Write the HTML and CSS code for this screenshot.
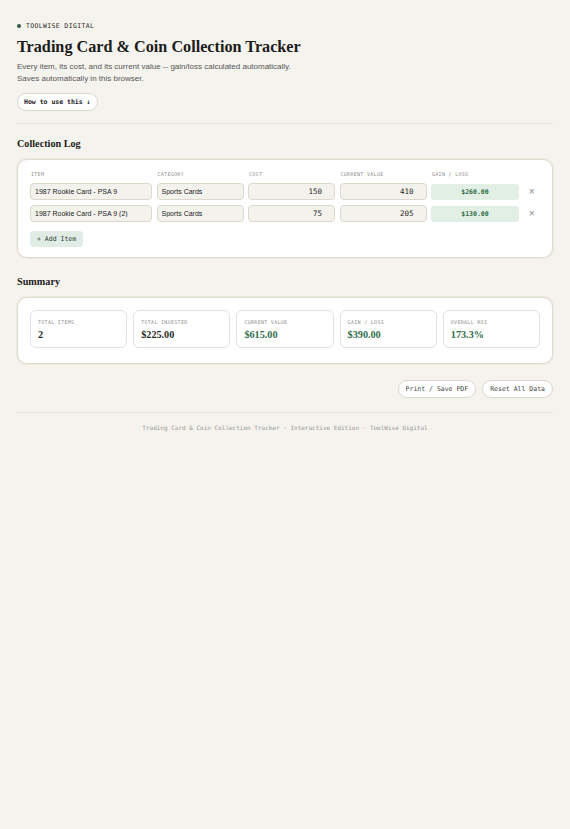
FILE: index.html
```html
<!DOCTYPE html>
<html lang="en">
<head>
	<meta charset="UTF-8">
	<meta name="viewport" content="width=device-width, initial-scale=1.0">
	<title>Trading Card &amp; Coin Collection Tracker</title>
	<link rel="stylesheet" href="styles.css">
</head>
<body>
	<div class="page">
		<header class="top">
			<div class="brand"><span class="brand-dot"></span>TOOLWISE DIGITAL</div>
			<h1>Trading Card &amp; Coin Collection Tracker</h1>
			<p class="lead">Every item, its cost, and its current value -- gain/loss calculated automatically.<br>Saves automatically in this browser.</p>
			<button class="pill pill-bold">How to use this ↓</button>
		</header>

		<hr class="rule">

		<h2>Collection Log</h2>
		<div class="card log">
			<div class="log-row log-head">
				<span>Item</span>
				<span>Category</span>
				<span>Cost</span>
				<span>Current Value</span>
				<span>Gain / Loss</span>
				<span></span>
			</div>
			<div class="log-row">
				<input class="field" type="text" value="1987 Rookie Card - PSA 9">
				<input class="field" type="text" value="Sports Cards">
				<input class="field num" type="text" value="150">
				<input class="field num" type="text" value="410">
				<div class="gain">$260.00</div>
				<button class="remove">×</button>
			</div>
			<div class="log-row">
				<input class="field" type="text" value="1987 Rookie Card - PSA 9 (2)">
				<input class="field" type="text" value="Sports Cards">
				<input class="field num" type="text" value="75">
				<input class="field num" type="text" value="205">
				<div class="gain">$130.00</div>
				<button class="remove">×</button>
			</div>
			<button class="add">+ Add Item</button>
		</div>

		<h2>Summary</h2>
		<div class="card stats">
			<div class="stat">
				<div class="stat-label">Total Items</div>
				<div class="stat-value">2</div>
			</div>
			<div class="stat">
				<div class="stat-label">Total Invested</div>
				<div class="stat-value">$225.00</div>
			</div>
			<div class="stat">
				<div class="stat-label">Current Value</div>
				<div class="stat-value up">$615.00</div>
			</div>
			<div class="stat">
				<div class="stat-label">Gain / Loss</div>
				<div class="stat-value up">$390.00</div>
			</div>
			<div class="stat">
				<div class="stat-label">Overall ROI</div>
				<div class="stat-value up">173.3%</div>
			</div>
		</div>

		<div class="actions">
			<button class="pill">Print / Save PDF</button>
			<button class="pill">Reset All Data</button>
		</div>

		<hr class="rule">

		<footer class="foot">Trading Card &amp; Coin Collection Tracker · Interactive Edition · ToolWise Digital</footer>
	</div>
</body>
</html>
```

FILE: styles.css
```css
*{margin:0;padding:0;box-sizing:border-box;}
body{background:#f5f3ee;color:#1c1c1a;font-family:"Liberation Sans",Arial,sans-serif;}
.page{padding:22px 17px 40px;}

.brand{display:flex;align-items:center;gap:5px;font-family:"DejaVu Sans Mono",monospace;font-size:6.5px;letter-spacing:0.35px;color:#2b2b2b;}
.brand-dot{width:4px;height:4px;border-radius:50%;background:#2d5a3d;}
h1{font-family:"Liberation Serif","Times New Roman",serif;font-size:16.2px;font-weight:bold;margin-top:8px;line-height:1.2;}
.lead{font-size:8px;line-height:12px;color:#555;margin-top:4px;}
.pill{font-family:"DejaVu Sans Mono",monospace;font-size:6.5px;color:#444;background:#fff;border:1px solid #dcd8ce;border-radius:10px;padding:4px 7px;cursor:pointer;}
.pill-bold{font-weight:bold;color:#222;margin-top:8px;padding:4px 6px;}

.rule{border:0;border-top:1px solid #e4e0d7;margin:12px 0 14px;}

h2{font-family:"Liberation Serif","Times New Roman",serif;font-size:10.2px;font-weight:bold;margin-bottom:10px;}
.card{background:#fff;border:1px solid #dfdbd0;border-radius:10px;box-shadow:0 0 0 1px #ece9e1;}

.log{padding:11px 12px 10px;margin-bottom:18px;}
.log-row{display:grid;grid-template-columns:122px 87px 87px 87px 88px 1fr;gap:4.5px;align-items:center;margin-bottom:5px;}
.log-head{font-family:"DejaVu Sans Mono",monospace;font-size:5px;text-transform:uppercase;letter-spacing:0.3px;color:#8f8f8f;margin-bottom:6px;padding-left:1px;}
.field{height:17px;background:#f4f2ed;border:1px solid #ddd8cc;border-radius:4px;font-family:"Liberation Sans",Arial,sans-serif;font-size:7px;color:#222;padding:0 4px;width:100%;}
.field.num{font-family:"DejaVu Sans Mono",monospace;text-align:right;padding-right:12px;font-size:7.5px;}
.gain{height:16px;background:#e1efe5;border-radius:3px;display:flex;align-items:center;justify-content:center;font-family:"DejaVu Sans Mono",monospace;font-size:6.5px;font-weight:bold;color:#2d6b45;}
.remove{border:0;background:none;color:#888;font-size:10px;justify-self:center;cursor:pointer;}
.add{margin-top:1px;border:0;background:#e2ece6;border-radius:4px;font-family:"DejaVu Sans Mono",monospace;font-size:6.5px;color:#2a3b31;padding:4px 7px;cursor:pointer;}

.stats{display:grid;grid-template-columns:repeat(5,1fr);gap:6px;padding:12px 12px 15px;}
.stat{border:1px solid #e5e2da;border-radius:6px;padding:8px 7px 7px;}
.stat-label{font-family:"DejaVu Sans Mono",monospace;font-size:5px;text-transform:uppercase;letter-spacing:0.3px;color:#8f8f8f;}
.stat-value{font-family:"Liberation Serif","Times New Roman",serif;font-size:10.2px;font-weight:bold;margin-top:4px;color:#1f2a24;}
.stat-value.up{color:#2f6e4a;}

.actions{display:flex;justify-content:flex-end;gap:6px;margin-top:16px;}
.actions + .rule{margin:14px 0 11px;}
.foot{text-align:center;font-family:"DejaVu Sans Mono",monospace;font-size:6px;color:#999;}
```
